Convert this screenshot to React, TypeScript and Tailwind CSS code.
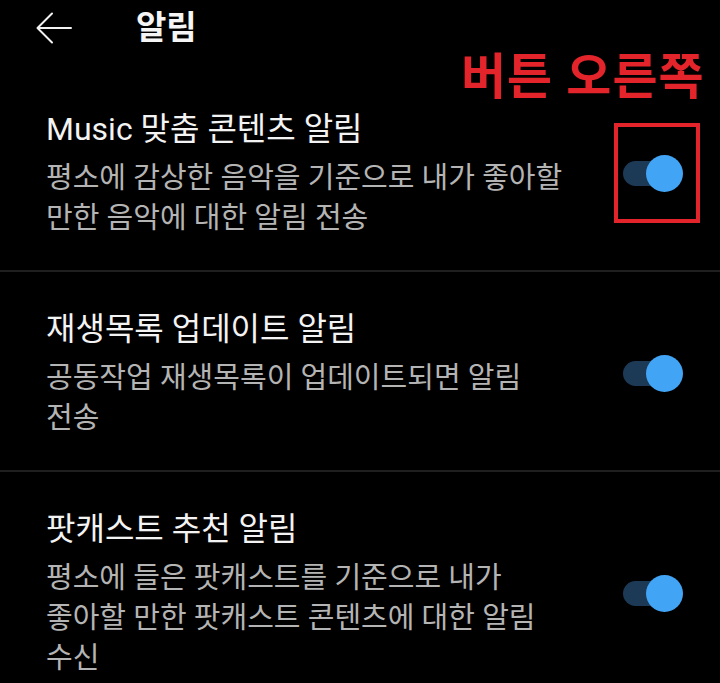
import React from "react";

type Item = {
  title: string;
  lines: string[];
  highlighted?: boolean;
};

const items: Item[] = [
  {
    title: "Music 맞춤 콘텐츠 알림",
    lines: ["평소에 감상한 음악을 기준으로 내가 좋아할", "만한 음악에 대한 알림 전송"],
    highlighted: true,
  },
  {
    title: "재생목록 업데이트 알림",
    lines: ["공동작업 재생목록이 업데이트되면 알림", "전송"],
  },
  {
    title: "팟캐스트 추천 알림",
    lines: [
      "평소에 들은 팟캐스트를 기준으로 내가",
      "좋아할 만한 팟캐스트 콘텐츠에 대한 알림",
      "수신",
    ],
  },
];

function Toggle() {
  return (
    <div className="relative h-[37px] w-[60px]">
      <div className="absolute left-0 top-[6px] h-[25px] w-[50px] rounded-full bg-[#1c3a56]" />
      <div className="absolute right-0 top-0 h-[37px] w-[37px] rounded-full bg-[#42a4f4]" />
    </div>
  );
}

export default function App() {
  return (
    <div
      className="relative h-[683px] w-[720px] overflow-hidden bg-black"
      style={{ fontFamily: '"Roboto", "Noto Sans CJK KR", sans-serif' }}
    >
      {/* header */}
      <div className="flex h-[72px] items-start pt-[8px]">
        <div className="ml-[36px] flex h-[40px] w-[36px] items-center">
          <svg width="36" height="32" viewBox="0 0 36 32" fill="none">
            <path
              d="M35 16H2M16 1.5L1.5 16L16 30.5"
              stroke="#f2f2f2"
              strokeWidth="2"
              strokeLinecap="round"
              strokeLinejoin="round"
            />
          </svg>
        </div>
        <h1 className="ml-[64px] text-[33px] font-bold leading-[40px] text-[#f5f5f5]">알림</h1>
      </div>

      {/* annotation */}
      <div className="absolute left-[461px] top-[48px] text-[49px] font-bold leading-[60px] tracking-[1px] text-[#e3242b]">
        버튼 오른쪽
      </div>

      <ul>
        {items.map((item, i) => (
          <li key={item.title}>
            {i > 0 && <div className="h-[2px] bg-[#1f1f1f]" />}
            <div className="flex items-center pb-[32px] pl-[46px] pr-[37px] pt-[37px]">
              <div className="whitespace-nowrap">
                <div className="text-[32px] leading-[40px] text-[#f3f3f3]">{item.title}</div>
                <div className="mt-[9px] text-[29px] leading-[40px] text-[#b4b4b4]">
                  {item.lines.map((line) => (
                    <div key={line}>{line}</div>
                  ))}
                </div>
              </div>
              <div className="ml-auto">
                <div className="relative">
                  <Toggle />
                  {item.highlighted && (
                    <div className="absolute -left-[9px] -top-[32px] h-[100px] w-[86px] border-[4px] border-[#e3242b]" />
                  )}
                </div>
              </div>
            </div>
          </li>
        ))}
      </ul>
    </div>
  );
}
